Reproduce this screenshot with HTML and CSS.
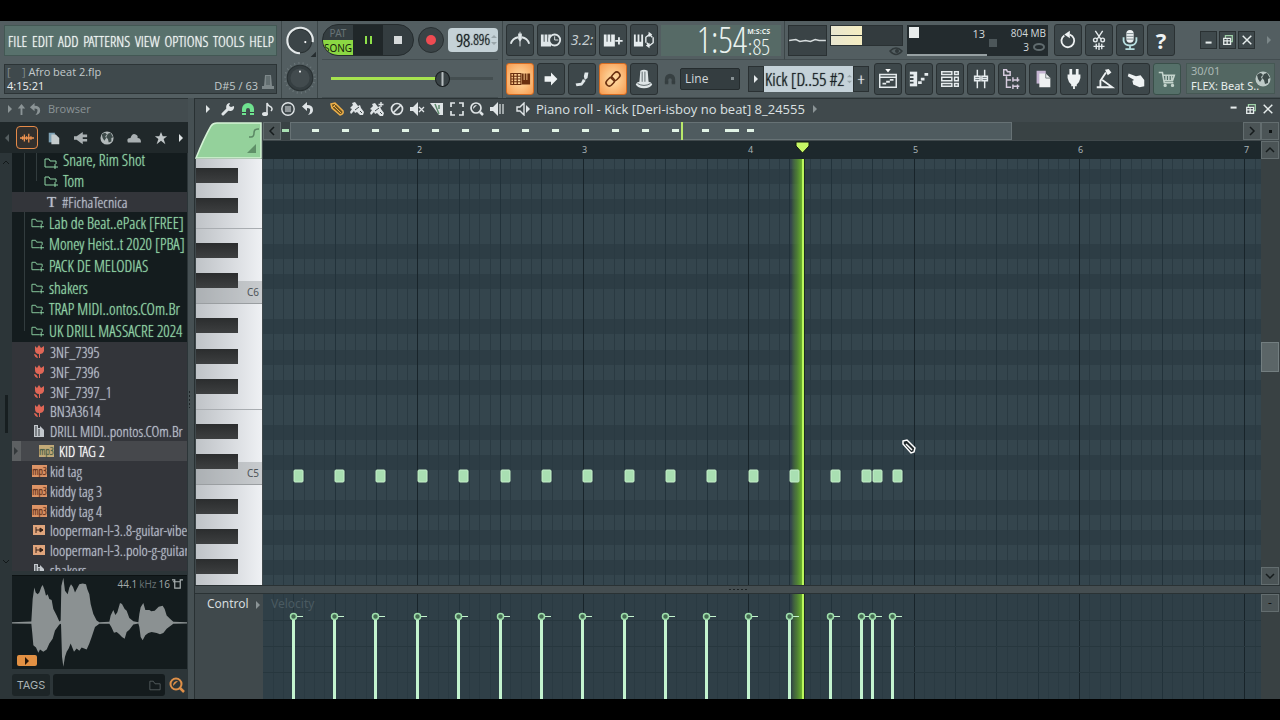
FILE: index.html
```html
<!DOCTYPE html>
<html lang="en">
<head>
<meta charset="utf-8">
<title>Piano roll - Afro beat 2.flp</title>
<link rel="stylesheet" href="styles.css">
</head>
<body>
<svg class="defs" aria-hidden="true">
  <symbol id="folder" viewBox="0 0 14 14"><path d="M9 11H1V3h4l1 2h6v3M11 8v5M9 11h5" fill="none" stroke="currentColor"/></symbol>
  <symbol id="tulip" viewBox="0 0 14 14"><path d="M3 1l2 2 2-3 2 3 3-2v5q-1 3-4 3v4H7V9Q3 9 3 5zM2 9q3 0 4 4Q3 13 2 9z" fill="#df6656"/></symbol>
  <symbol id="filepic" viewBox="0 0 14 14"><path d="M2 1h4v3h2v-2l4 4v7H2z" fill="#c3c8cd"/><path d="M4 2v10M7 5v7" stroke="#33363b"/></symbol>
  <symbol id="loop" viewBox="0 0 14 14"><path d="M1 2h12v10H1z" fill="#e0a57c"/><path d="M4 4v6M4 7h7M8 5l3 2-3 2z" stroke="#3a251a" fill="#3a251a"/></symbol>
  <symbol id="tri" viewBox="0 0 8 10"><path d="M2 1l4 4-4 4z" fill="currentColor"/></symbol>
  <symbol id="restore" viewBox="0 0 14 14"><path d="M4 5V2h8v7h-2" fill="none" stroke="#9fd0a8" stroke-width="1.5"/><path d="M2 5h8v7H2zM2 8h8M6 6v6" fill="none" stroke="#e6ecec" stroke-width="1.5"/></symbol>
  <symbol id="close" viewBox="0 0 14 14"><path d="M2 2l10 10M12 2L2 12" stroke="#e6ecec" stroke-width="1.7"/></symbol>
  <symbol id="min" viewBox="0 0 14 14"><path d="M3 10h7" stroke="#e6ecec" stroke-width="2.4"/></symbol>
  <symbol id="undo" viewBox="0 0 14 14"><path d="M6 0L1 4.500 6 9V6q4 0 3 3 0 2-2 4 5-1 5-5 0-5-6-5z" fill="currentColor"/></symbol>
  <symbol id="magnet" viewBox="0 0 14 14"><path d="M1 13V7a6 6 0 0112 0v6H9V8a2 2 0 00-4 0v5z" fill="currentColor"/><path d="M1 10.5h4M9 10.5h4" stroke="#333d40"/></symbol>
  <symbol id="globe" viewBox="0 0 16 16"><circle cx="8" cy="8" r="7.5" fill="currentColor"/><path d="M2 4q2-2 4-2l2 2-2 2 1 2-2 3-2-3zM9 3l3-1 3 5-2 1 0 4-3 1-1-4-2-2z" fill="#3d4a49"/></symbol>
  <symbol id="brush" viewBox="0 0 14 14"><path d="M2 1l3-1 3 4 2-1 1 3 3 4-1 3-3 0-3-3-2 1-1-2-3 3-1-2 2-3-2-1 3-3z" fill="currentColor"/><path d="M5 8l4-3M10 9l2 2" stroke="#3d474a"/></symbol>
</svg>

<div class="app">
<header class="toolbar">
  <section class="block brand">
    <nav class="menu">
      <button>FILE</button><button>EDIT</button><button>ADD</button><button>PATTERNS</button><button>VIEW</button><button>OPTIONS</button><button>TOOLS</button><button>HELP</button>
    </nav>
    <div class="hint">
      <div><span class="dim">[ &nbsp; &nbsp;]</span> Afro beat 2.flp</div>
      <div class="hint-row"><span class="bright">4:15:21</span><span>D#5 / 63</span></div>
      <svg class="hint-knob" viewBox="0 0 12 16"><path d="M3 1h6l1 11h2v3H0v-3h2z" fill="#7d8789"/><path d="M5 2v9M7 2v9" stroke="#4b5658"/></svg>
    </div>
  </section>
  <section class="block knobs">
    <svg viewBox="0 0 32 32"><circle cx="16" cy="16" r="11" fill="#3b4447" stroke="#2a3133"/><path d="M16 27.500A12 12 0 1 1 28 17" fill="none" stroke="#e4e9ea" stroke-width="2"/><circle cx="21" cy="17" r="1" fill="#fff"/><path d="M31 26v5h-5z" fill="#262d2f"/></svg>
    <svg viewBox="0 0 32 32"><circle cx="16" cy="15" r="14" fill="none" stroke="#6a7578" stroke-dasharray="1 3" stroke-width="2"/><circle cx="16" cy="15" r="12" fill="#353e41" stroke="#293133"/><circle cx="16" cy="15" r="9" fill="#424b4e"/><circle cx="16" cy="9" r="1" fill="#e6eaea"/></svg>
  </section>
  <section class="block transport">
    <div class="row play">
      <div class="pill">
        <div class="mode"><button class="pat">PAT</button><button class="song">SONG</button></div>
        <button class="pause" aria-label="Pause"><i></i><i></i></button>
        <button class="stop" aria-label="Stop"><i></i></button>
      </div>
      <button class="rec" aria-label="Record"><i></i></button>
      <div class="tempo"><b>98</b><span>.896</span><svg viewBox="0 0 8 14"><path d="M1 5l3-3 3 3zM1 9l3 3 3-3z" fill="#9aa6aa"/></svg></div>
    </div>
    <div class="row"><input class="volume" type="range" min="0" max="100" value="71" aria-label="Song position"></div>
  </section>
  <section class="block center">
    <div class="row">
      <button class="tool" aria-label="Metronome"><svg viewBox="0 0 24 24"><path d="M2 16Q4 10 10 9M22 16Q20 10 14 9" fill="none" stroke="#dfe6e8" stroke-width="2"/><path d="M12 3v16" stroke="#dfe6e8"/><path d="M10 5h4v6l-2 3-2-3z" fill="#dfe6e8"/></svg></button>
      <button class="tool" aria-label="Wait for input"><svg viewBox="0 0 24 24"><path d="M1 6h3v8h1V6h3v8h1V6h3v13H1z" fill="#dfe6e8"/><circle cx="16" cy="12" r="6" fill="#3a4447" stroke="#dfe6e8" stroke-width="2"/><path d="M16 8v4h4" stroke="#dfe6e8" fill="none"/></svg></button>
      <button class="tool count" aria-label="Countdown">3.2:</button>
      <button class="tool" aria-label="Blend notes"><svg viewBox="0 0 24 24"><path d="M2 6h3v8h1V6h3v8h1V6h4v13H2z" fill="#e6ecee"/><path d="M18.500 9v8M14.500 13h8" stroke="#e6ecee" stroke-width="2"/></svg></button>
      <button class="tool" aria-label="Loop record"><svg viewBox="0 0 24 24"><path d="M1 6h2v8h2V6h2v8h2V6h2v13H1z" fill="#e6ecee"/><path d="M14 15V9l4-3 3 3M22 9v6l-4 3-3-3" fill="none" stroke="#e6ecee" stroke-width="1.500"/><path d="M17 3l4 3-4 3zM18 15l-4 3 4 3z" fill="#e6ecee"/></svg></button>
      <div class="clock"><span class="big">1:54</span><span class="small"><em>M:S:CS</em>:85</span></div>
    </div>
    <div class="row">
      <button class="tool on" aria-label="Typing keyboard"><svg viewBox="0 0 24 24"><path d="M2 6h11v12H2zM2 9h11M2 12h11M2 15h11M5 6v12M9 6v12" fill="none" stroke="#6a3010" stroke-width="1.300"/><path d="M14 6h2v7h1V6h2v7h1V6h3v12h-9z" fill="#6a3010"/></svg></button>
      <button class="tool" aria-label="Step"><svg viewBox="0 0 24 24"><path d="M5 9h7V5l7 7-7 7v-4H5z" fill="#eef2f3"/></svg></button>
      <button class="tool" aria-label="Slide"><svg viewBox="0 0 24 24"><path d="M15 5l4 0-1 6-3 2-1-4zM13 12l3 2-4 5-6 1-1-3 6-1z" fill="#dfe6e8"/></svg></button>
      <button class="tool on" aria-label="Link"><svg viewBox="0 0 24 24" fill="none" stroke="#6a3010" stroke-width="1.700"><rect x="11.500" y="4" width="7" height="10" rx="3.500" transform="rotate(45 15 9)"/><rect x="5.500" y="10" width="7" height="10" rx="3.500" transform="rotate(45 9 15)"/></svg></button>
      <button class="tool" aria-label="Multilink"><svg viewBox="0 0 24 24"><path d="M8 3q4-2 8 0l1 12q3 0 4 3-2 4-9 4t-9-4q1-3 4-3z" fill="#dfe6e8"/><path d="M10 4v11M13 4v11M5 17q7 4 14 0" fill="none" stroke="#556064"/></svg></button>
      <svg class="snapicon"><use href="#magnet"/></svg>
      <select class="snap" aria-label="Snap"><option>Line</option></select>
      <div class="pattern"><button aria-label="Pattern menu"><svg><use href="#tri"/></svg></button><span>Kick [D..55 #2</span><svg class="updown" viewBox="0 0 8 14"><path d="M1 5l3-3 3 3zM1 9l3 3 3-3z" fill="#9aa6aa"/></svg><button aria-label="Add pattern">+</button></div>
    </div>
  </section>
  <section class="block right">
    <div class="row">
      <div class="scope"><svg viewBox="0 0 38 30"><path d="M0 15l7-1 4 2 6-1 5 1 5-2 4 1h7" fill="none" stroke="#d6dcdd" stroke-width="1.500"/></svg></div>
      <div class="peak"><div class="meter"><i></i><i></i></div><svg viewBox="0 0 14 9"><path d="M1 4q6-6 12 0-6 7-12 0z" fill="none" stroke="#30383a" stroke-width="1.500"/><circle cx="8" cy="4" r="2" fill="#30383a"/></svg></div>
      <div class="cpu"><div class="cpu-l"><i></i><span>13</span></div><div class="cpu-r"><i></i><span>804 MB</span><span>3 <svg viewBox="0 0 14 8"><ellipse cx="7" cy="4" rx="5" ry="3" fill="none" stroke="#606b6e" stroke-width="2"/></svg></span></div></div>
      <div class="tools">
        <button class="tool" aria-label="Undo"><svg viewBox="0 0 24 24"><path d="M14 6.200a7 7 0 1 1-6 .800" fill="none" stroke="#eef2f3" stroke-width="2"/><path d="M14 2v8L8 6z" fill="#eef2f3"/></svg></button>
        <button class="tool" aria-label="Cut"><svg viewBox="0 0 24 24" fill="none" stroke="#e6ecee" stroke-width="1.500"><path d="M8 2l6 9M16 2l-6 9"/><circle cx="8" cy="12" r="2"/><circle cx="16" cy="12" r="2"/><path d="M6 19h12M9 16v6M12 15v8M15 16v6"/></svg></button>
        <button class="tool" aria-label="Record audio"><svg viewBox="0 0 24 24"><rect x="8" y="1" width="8" height="14" rx="4" fill="#eef2f3"/><path d="M8 5h8M8 8h8M8 11h8" stroke="#77858a"/><path d="M5 9v4q1 5 7 5t7-5V9M12 18v4M7 22h10" fill="none" stroke="#b8dfe0" stroke-width="2"/></svg></button>
        <button class="tool help" aria-label="Help">?</button>
      </div>
      <div class="win"><button aria-label="Minimize"><svg><use href="#min"/></svg></button><button aria-label="Restore"><svg><use href="#restore"/></svg></button><button aria-label="Close"><svg><use href="#close"/></svg></button></div>
      <svg class="more"><use href="#tri"/></svg>
    </div>
    <div class="row">
      <button class="tool" aria-label="Playlist"><svg viewBox="0 0 24 24"><path d="M9 1h6l-3 4z" fill="#fff"/><path d="M3 7h18v14H3zM3 10h18" fill="none" stroke="#e6ecee" stroke-width="1.600"/><path d="M6 17h4M10 15h4M14 13h4" stroke="#e6ecee" stroke-width="2"/></svg></button>
      <button class="tool" aria-label="Piano roll"><svg viewBox="0 0 24 24"><path d="M2 4h8v16H2z" fill="#e6ecee"/><path d="M2 8h4M2 12h4M2 16h4" stroke="#3d474a" stroke-width="2"/><path d="M11 16h4M14 12h4M18 7h4" stroke="#e6ecee" stroke-width="3"/></svg></button>
      <button class="tool" aria-label="Channel rack"><svg viewBox="0 0 24 24" fill="none" stroke="#e6ecee" stroke-width="1.600"><path d="M3 4h11v3H3zM3 10h11v4H3zM3 17h11v3H3zM17 4h4v3h-4zM17 10h4v4h-4zM17 17h4v3h-4z"/></svg></button>
      <button class="tool" aria-label="Mixer"><svg viewBox="0 0 24 24" fill="none" stroke="#e6ecee" stroke-width="1.600"><path d="M8 2v20M16 2v20"/><path d="M5 9h6v5H5zM13 9h6v5h-6z" fill="#59656a"/><path d="M5 11.500h6M13 11.500h6"/></svg></button>
      <button class="tool" aria-label="Browser"><svg viewBox="0 0 24 24" fill="none" stroke="#d5cadd" stroke-width="1.600"><path d="M3 2h3l1 2h3v4H3zM6 9v12h5M6 13h5M13 10v5M13 18v5M13 13h7M13 20h7M18 10v5M18 18v5"/></svg></button>
      <button class="tool" aria-label="Project picker"><svg viewBox="0 0 24 24"><path d="M5 3h10v14H5z" fill="#c5b5d2"/><path d="M8 6h7l5 5v10H8z" fill="#eef0f1"/><path d="M15 6v5h5" fill="none" stroke="#6d777a"/></svg></button>
      <button class="tool" aria-label="Plugins"><svg viewBox="0 0 24 24"><path d="M7 1h3v6h4V1h3v6h2v4q-1 5-4 7v2h-2v3h-2v-3H9v-2q-3-2-4-7V7h2z" fill="#eef2f3"/></svg></button>
      <button class="tool" aria-label="Tempo tapper"><svg viewBox="0 0 24 24"><path d="M13 5L7 14v7M9 13l11 8H3" fill="none" stroke="#eef2f3" stroke-width="2"/><path d="M12 2l4-1 3 4-4 3z" fill="#eef2f3"/></svg></button>
      <button class="tool" aria-label="Touch"><svg viewBox="0 0 24 24"><path d="M4 6l8 3 5-1 4 5v7l-5 1-7-3-1-4 2-1-7-4z" fill="#eef2f3"/></svg></button>
      <button class="tool cart" aria-label="Shop"><svg viewBox="0 0 24 24" fill="none" stroke="#c4d3cc" stroke-width="1.700"><path d="M3 5h4l2 11h10M7 8h13l-2 6H9M11 8v6M14 8v6M17 8v6"/><circle cx="10" cy="19" r="1"/><circle cx="18" cy="19" r="1"/></svg></button>
      <div class="news"><span class="date">30/01</span><span>FLEX: Beat S..</span><svg><use href="#globe"/></svg></div>
    </div>
  </section>
</header>

<main class="work">
  <aside class="browser">
    <div class="bhead"><svg class="t"><use href="#tri"/></svg><svg viewBox="0 0 14 14"><path d="M7 1l4 5H8v7H6V6H3z" fill="currentColor"/></svg><svg><use href="#undo"/></svg><span>Browser</span></div>
    <div class="tabs">
      <svg class="t flip"><use href="#tri"/></svg>
      <button class="active" aria-label="All"><svg viewBox="0 0 16 16"><path d="M0 8h16M3 6v4M5 4v8M7.500 6v4M10 3v10M12.500 6v4" stroke="#ee9250" stroke-width="1.500"/></svg></button>
      <button aria-label="Project"><svg viewBox="0 0 16 16"><path d="M2 2h7v11H2z" fill="#7ea2b5"/><path d="M5 4h5l4 4v7H5z" fill="#c4cbcc"/></svg></button>
      <button aria-label="Plugins"><svg viewBox="0 0 16 16"><path d="M0 6h3l7-5v14l-7-5H0zM10 4h5v3h-5zM10 9h5v3h-5z" fill="#a9b0b2"/></svg></button>
      <button aria-label="Library"><svg><use href="#globe"/></svg></button>
      <button aria-label="Cloud"><svg viewBox="0 0 16 16"><path d="M1 13q-2-5 3-5 2-6 6-4 3 1 2 4 4 0 4 5z" fill="#a9b0b2"/></svg></button>
      <button aria-label="Starred"><svg viewBox="0 0 16 16"><path d="M8 1l2 5h5l-4 3 2 6-5-4-5 4 2-6-4-3h5z" fill="#c1c7c9"/></svg></button>
      <svg class="t lit"><use href="#tri"/></svg>
    </div>
    <div class="bmid">
      <div class="gutter"><svg viewBox="0 0 10 6"><path d="M2 5l3-3 3 3" fill="none" stroke="#121819"/></svg><i></i><svg viewBox="0 0 10 6"><path d="M2 1l3 3 3-3" fill="none" stroke="#121819"/></svg></div>
      <div class="list">
        <ul class="sub folders"><li><svg><use href="#folder"/></svg>Snare, Rim Shot</li><li><svg><use href="#folder"/></svg>Tom</li></ul>
        <p class="note"><b>T</b>#FichaTecnica</p>
        <ul class="packs folders">
          <li><svg><use href="#folder"/></svg>Lab de Beat..ePack [FREE]</li><li><svg><use href="#folder"/></svg>Money Heist..t 2020 [PBA]</li><li><svg><use href="#folder"/></svg>PACK DE MELODIAS</li><li><svg><use href="#folder"/></svg>shakers</li><li><svg><use href="#folder"/></svg>TRAP MIDI..ontos.COm.Br</li><li><svg><use href="#folder"/></svg>UK DRILL MASSACRE 2024</li>
        </ul>
        <ul class="files">
          <li><svg><use href="#tulip"/></svg>3NF_7395</li><li><svg><use href="#tulip"/></svg>3NF_7396</li><li><svg><use href="#tulip"/></svg>3NF_7397_1</li><li><svg><use href="#tulip"/></svg>BN3A3614</li><li><svg><use href="#filepic"/></svg>DRILL MIDI..pontos.COm.Br</li>
          <li class="sel"><span class="grip"><svg><use href="#tri"/></svg></span><b>mp3</b>KID TAG 2</li>
          <li><b>mp3</b>kid tag</li><li><b>mp3</b>kiddy tag 3</li><li><b>mp3</b>kiddy tag 4</li><li><svg><use href="#loop"/></svg>looperman-l-3..8-guitar-vibe</li><li><svg><use href="#loop"/></svg>looperman-l-3..polo-g-guitar</li><li><svg><use href="#filepic"/></svg>shakers</li>
        </ul>
      </div>
    </div>
    <div class="preview">
      <svg class="wave" viewBox="36 45 525 282" preserveAspectRatio="none"><path d="M36 185L94 183 98 115 103 80 107 95 113 100 118 95 124 78 128 72 133 85 138 105 143 100 148 115 155 118 160 145 170 165 178 183 182 180 184 75 190 50 195 90 203 100 208 80 213 70 219 78 225 95 230 85 238 70 248 68 258 70 262 85 268 100 272 130 280 160 290 180 298 185 328 184 332 165 340 148 346 163 352 155 360 127 366 130 374 145 380 150 388 172 400 182 415 185 418 160 422 140 430 127 436 148 448 148 454 152 464 150 476 138 488 135 494 145 500 165 510 175 520 184 561 185V189L520 190 510 197 500 205 490 218 480 222 470 218 455 215 445 218 436 225 428 240 422 230 418 200 415 189 400 192 388 208 380 215 374 235 366 230 358 222 350 215 342 217 334 200 328 190 298 190 285 200 275 230 268 250 260 268 245 262 238 272 230 265 222 275 212 250 206 265 200 275 195 290 190 320 186 290 183 190 178 192 165 210 158 235 148 250 140 268 130 275 120 268 115 278 108 262 100 255 97 220 94 190 36 189z" fill="#8b9192"/></svg>
      <span class="rate"><span>44.1</span> kHz <span>16</span><svg viewBox="0 0 12 12"><path d="M3 3h6v7H3zM0 1h3v2H1M12 1H9v2" fill="none" stroke="#aab2b3" stroke-width="1.300"/></svg></span>
      <button class="pv" aria-label="Preview"><svg><use href="#tri"/></svg></button>
    </div>
    <div class="tags"><button>TAGS</button><label class="search"><input type="text" aria-label="Search"><svg viewBox="0 0 14 12"><path d="M1 11V1h4l2 3h6v7z" fill="none" stroke="#596162"/></svg></label><svg class="mag" viewBox="0 0 16 16"><circle cx="7" cy="7" r="5.500" fill="none" stroke="#df9048" stroke-width="2"/><path d="M11 11l4 4" stroke="#df9048" stroke-width="2.500"/><path d="M4 9q0-5 5-5z" fill="#df9048"/></svg></div>
  </aside>
  <div class="divider"><i></i></div>

  <section class="roll">
    <div class="rtitle">
      <div class="icons">
        <svg class="t lit"><use href="#tri"/></svg>
        <svg viewBox="0 0 14 14"><path d="M2 12l6-6" stroke="#dfe4e6" stroke-width="3" stroke-linecap="round"/><path d="M13 4a4 4 0 1 1-4-3L8 4l2 1z" fill="#dfe4e6"/></svg>
        <svg class="green"><use href="#magnet"/></svg>
        <svg viewBox="0 0 14 14"><ellipse cx="4" cy="12" rx="3" ry="2" fill="#dfe4e6"/><path d="M6 12V1q1 3 4 4 2 2 0 4" fill="none" stroke="#dfe4e6" stroke-width="1.500"/></svg>
        <svg viewBox="0 0 14 14"><circle cx="7" cy="7" r="6.200" fill="none" stroke="#dfe4e6" stroke-width="1.400"/><path d="M4 5h6M4 7h6M4 9h6" stroke="#dfe4e6"/></svg>
        <svg><use href="#undo"/></svg>
      </div>
      <div class="icons">
        <svg viewBox="0 0 14 14"><path d="M1 2l4-1 8 8q1 3-3 4L2 6z" fill="#70541f" stroke="#eeb04a" stroke-width="1.500"/><path d="M4 4l7 7M2 6l4-4" stroke="#eeb04a"/></svg>
        <svg><use href="#brush"/></svg>
        <svg viewBox="0 0 14 14"><use href="#brush" y="1"/><path d="M11 0v5M8.500 2.500h5" stroke="#dfe4e6" stroke-width="1.400"/></svg>
        <svg viewBox="0 0 14 14"><circle cx="7" cy="7" r="5.500" fill="none" stroke="#dfe4e6" stroke-width="1.700"/><path d="M3 11l8-8" stroke="#dfe4e6" stroke-width="1.700"/></svg>
        <svg viewBox="0 0 14 14"><path d="M0 5h3l5-5v14L3 9H0z" fill="#dfe4e6"/><path d="M9 5l5 5M14 5l-5 5" stroke="#dfe4e6" stroke-width="1.300"/></svg>
        <svg viewBox="0 0 14 14"><path d="M0 1h13v12H9z" fill="#dfe4e6"/><path d="M5 2l4 10M9 3v4" stroke="#5e8a6c" stroke-width="1.500"/></svg>
        <svg viewBox="0 0 14 14"><path d="M1 5V1h4M9 1h4v4M13 9v4H9M5 13H1V9" fill="none" stroke="#dfe4e6" stroke-width="1.700"/></svg>
        <svg viewBox="0 0 14 14"><circle cx="6" cy="6" r="5" fill="none" stroke="#dfe4e6" stroke-width="1.700"/><path d="M10 10l3 3" stroke="#dfe4e6" stroke-width="2.500"/><path d="M3 7q0-4 4-4z" fill="#dfe4e6"/></svg>
        <svg viewBox="0 0 14 14"><path d="M0 5h3l5-5v14L3 9H0z" fill="#dfe4e6"/><path d="M10 2v10M13 2v10" stroke="#dfe4e6" stroke-width="1.200"/></svg>
      </div>
      <div class="caption"><svg viewBox="0 0 14 14"><path d="M1 5h3l4-4v12L4 9H1z" fill="none" stroke="#dfe4e6" stroke-width="1.400"/><path d="M10 3l4 4-4 4z" fill="#dfe4e6"/></svg><span>Piano roll - Kick [Deri-isboy no beat] 8_24555</span><svg class="t"><use href="#tri"/></svg></div>
      <div class="rwin"><svg class="m"><use href="#min"/></svg><svg><use href="#restore"/></svg><svg><use href="#close"/></svg></div>
    </div>
    <div class="stage">
      <div class="corner"><svg viewBox="0 0 68 37"><path d="M1 36Q9 16 16 4q2-3 6-3h44v35z" fill="#94d19b" stroke="#d5f3d6" stroke-width="1.500"/><path d="M54 15h2q3 0 3-4t4-4h1" fill="none" stroke="#5b8764" stroke-width="1.500"/><path d="M52 31l9-9v9z" fill="#5f9068"/></svg></div>
      <div class="mini"><button aria-label="Scroll left"><svg viewBox="0 0 10 10"><path d="M7 1L3 5l4 4" fill="none" stroke="#161c1d" stroke-width="1.500"/></svg></button><div class="track"><div class="view"></div><svg id="mini"></svg></div><button aria-label="Scroll right"><svg viewBox="0 0 10 10"><path d="M3 1l4 4-4 4" fill="none" stroke="#161c1d" stroke-width="1.500"/></svg></button></div>
      <button class="sq" aria-label="Zoom"><i></i></button>
      <div class="ruler"><svg id="ruler"></svg></div>
      <button class="sq" aria-label="Scroll up"><svg viewBox="0 0 10 10"><path d="M1 7l4-4 4 4" fill="none" stroke="#161c1d" stroke-width="1.500"/></svg></button>
      <div class="keys"><svg id="keys"></svg></div>
      <div class="grid"><svg id="grid"></svg></div>
      <div class="vscroll"><i></i><button class="sq" aria-label="Scroll down"><svg viewBox="0 0 10 10"><path d="M1 3l4 4 4-4" fill="none" stroke="#161c1d" stroke-width="1.500"/></svg></button></div>
      <div class="split"><i></i></div>
      <div class="ctl"><span>Control</span><svg class="t"><use href="#tri"/></svg></div>
      <div class="lane"><svg id="lane"></svg></div>
      <div class="lscroll"><button class="sq" aria-label="Lane size">-</button></div>
    </div>
  </section>
</main>
</div>
<script src="roll.js"></script>
</body>
</html>
```
FILE: styles.css
```css
:root { --narrow: "Open Sans Condensed Light", "Open Sans Condensed", "Liberation Sans Narrow", sans-serif; }
* { box-sizing: border-box; }
body { margin: 0; background: #000; color: #d5dbdd; font: 12px/16px "Noto Sans", "Open Sans", sans-serif; }
button { font: inherit; color: inherit; border: 0; padding: 0; background: none; display: flex; align-items: center; justify-content: center; text-shadow: inherit; }
ul, p { margin: 0; padding: 0; list-style: none; }
svg { display: block; flex: none; width: 14px; height: 14px; }
svg.t { width: 8px; height: 10px; color: #8b9496; }
svg.lit { color: #e0e5e6; }
.defs { position: absolute; width: 0; height: 0; }
.app { min-height: 100vh; padding: 21px 0 22px; display: flex; flex-direction: column; }

.toolbar { display: flex; background: #535e61; height: 77px; }
.block { display: grid; grid-template-rows: 39px 38px; border-right: 1px solid #3c4648; }
.block > * { border-bottom: 1px solid #434d50; }
.row { display: flex; align-items: center; gap: 3px; min-width: 0; }
.brand { flex: 0 0 282px; }
.brand > * { margin: 4px; }
.menu { background: #58716c; border: 1px solid #435854; display: flex; justify-content: space-between; align-items: center; padding: 0 2px 0 3px; font: 15px/20px var(--narrow); color: #f2f7f5; text-shadow: 0 0 1px currentColor; }
.hint { position: relative; background: #3f494c; border: 1px solid #2c3436; color: #c2c9cb; font: 11px/14px "Open Sans", sans-serif; padding: 0 18px 0 2px; }
.hint-row { display: flex; justify-content: space-between; }
.dim { color: #828c8f; }
.bright { color: #eceff0; }
.hint-knob { position: absolute; right: 2px; bottom: 3px; width: 12px; height: 16px; }
.knobs { flex: 0 0 36px; justify-items: center; align-items: center; }
.knobs svg { width: 34px; height: 36px; border: 0; }
.transport { flex: 0 0 185px; padding: 0 4px; }
.play { gap: 4px; }
.pill { display: flex; width: 92px; height: 32px; border-radius: 16px; overflow: hidden; background: #343d40; border: 1px solid #252c2e; }
.mode { flex: 1; display: grid; grid-template-rows: 1fr 1fr; font-size: 10px; line-height: 12px; }
.pat { color: #687376; }
.song { background: #8bd743; color: #15220b; }
.pause { width: 30px; background: #202729; gap: 3px; }
.pause i { width: 2px; height: 8px; background: #8ee04a; }
.stop { width: 30px; }
.stop i { width: 8px; height: 8px; background: #d6dadb; }
.rec { width: 26px; height: 26px; border-radius: 50%; background: #3a4346; border: 1px solid #282f31; }
.rec i { width: 10px; height: 10px; border-radius: 50%; background: #ee4b52; }
.tempo { flex: 1; height: 24px; border-radius: 4px; background: #c5d2d7; color: #151b1d; display: flex; align-items: center; justify-content: flex-end; font: 14px/20px var(--narrow); text-shadow: 0 0 1px currentColor; }
.tempo b { font-size: 18px; font-weight: 400; }
.tempo svg { width: 8px; }
.volume { appearance: none; width: 100%; height: 20px; margin: 0 5px 0 9px; background: linear-gradient(90deg, #a6e34f 71%, #444e50 71%) center / 100% 3px no-repeat; }
.volume::-webkit-slider-thumb { appearance: none; width: 15px; height: 16px; border-radius: 50%; border: 1px solid #171c1e; background: linear-gradient(90deg, #3a4346 5px, #b7bec0 6px, #b7bec0 7px, #3a4346 8px); }
.center { flex: 0 0 281px; padding-left: 3px; border-right: 0; }
.tool { flex: none; width: 28px; height: 32px; border: 1px solid #2a3133; border-radius: 3px; background: #3d474a; }
.tool svg { width: 22px; height: 22px; }
.count { font: italic 14px/16px "Noto Sans", sans-serif; color: #c7cfd2; }
.on { background: radial-gradient(#ffe2ac, #f79a4e); border-color: #d66c22; }
.help { font: 700 22px/24px "Noto Sans", sans-serif; color: #eef2f3; }
.cart { background: #557069; border-color: #3a504a; }
.clock { flex: 1; height: 31px; background: #566a66; margin-right: 3px; display: flex; justify-content: flex-end; align-items: flex-end; padding-right: 11px; color: #eaf2ef; font-family: var(--narrow); }
.big { font-size: 36px; line-height: 32px; }
.small { font-size: 22px; line-height: 20px; display: grid; justify-items: end; }
.small em { font: 700 7px/8px "Noto Sans", sans-serif; }
.snapicon { color: #374042; margin: 0 1px 0 3px; width: 12px; height: 12px; }
.snap { appearance: none; flex: none; width: 60px; height: 22px; border: 1px solid #252c2e; border-radius: 2px; background: #343d40 linear-gradient(#879194, #879194) right 5px center / 3px 3px no-repeat; color: #d2d8da; font: 12px/16px "Open Sans", sans-serif; padding: 0 4px; }
.pattern { flex: none; width: 121px; margin-left: 5px; display: flex; height: 26px; background: #c5d2d9; color: #182024; align-items: center; font: 18px/22px var(--narrow); text-shadow: 0 0 1px currentColor; }
.pattern span { flex: 1; min-width: 0; white-space: nowrap; padding-left: 1px; }
.pattern button { flex: none; width: 16px; height: 26px; background: #3d474a; border: 1px solid #2a3133; color: #e5eaeb; }
.pattern button svg { width: 8px; height: 12px; }
.updown { width: 7px; height: 12px; }
.right { flex: 1; border: 0; }
.right .row:first-child { border-left: 1px solid #3c4648; padding-left: 3px; }
.scope { width: 39px; height: 31px; background: #3a4346; border: 1px solid #2a3133; }
.scope svg { width: 37px; height: 29px; }
.peak { width: 73px; height: 31px; display: grid; justify-items: end; align-content: space-between; }
.meter { width: 100%; background: #333b3e; display: grid; gap: 1px; border: 1px solid #2a3133; }
.meter i { height: 9px; width: 31px; background: linear-gradient(90deg, #e9e6d0, #f5edc1); }
.peak svg { width: 14px; height: 9px; }
.cpu { width: 141px; height: 31px; background: #232b2e; display: flex; margin: 0 1px; font: 11px/14px "Open Sans", sans-serif; }
.cpu-l { width: 80px; display: flex; justify-content: space-between; padding: 2px; border-bottom: 2px solid #96a0a2; }
.cpu-l i { width: 10px; height: 11px; background: #e8ecec; }
.cpu-r { position: relative; flex: 1; display: grid; justify-items: end; align-content: center; padding-right: 2px; font-size: 10px; }
.cpu-r i { position: absolute; left: 2px; top: 14px; width: 8px; height: 8px; background: #4c5659; }
.cpu-r span { display: flex; gap: 3px; align-items: center; }
.tools { display: flex; gap: 3px; margin-left: 2px; }
.win { display: flex; gap: 2px; margin-left: auto; }
.win button { width: 17px; height: 18px; background: #3e484b; border: 1px solid #2a3133; }
.win svg { width: 12px; height: 12px; }
.more { width: 8px; height: 10px; margin: 0 7px; color: #7c8789; }
.right .row:last-child { padding-left: 90px; }
.news { position: relative; flex: 1; margin: 0 5px 0 2px; height: 31px; background: #536762; border: 1px solid #465854; padding: 0 4px; display: grid; font-size: 11px; line-height: 14px; color: #e8eeec; white-space: nowrap; }
.news .date { color: #aab7b4; }
.news svg { position: absolute; right: 3px; top: 7px; width: 16px; height: 16px; color: #bdc9c6; }

.work { flex: 1; display: flex; min-height: 600px; background: #40494c; }
.browser { flex: 0 0 188px; display: flex; flex-direction: column; background: #2c3538; font: 15px/18px var(--narrow); min-width: 0; }
.bhead { height: 24px; display: flex; align-items: center; gap: 1px; padding: 0 0 3px 6px; background: #434c4f; border-top: 1px solid #2b3335; color: #8b9496; font: 11px/16px "Open Sans", sans-serif; }
.bhead svg:not(.t) { width: 13px; height: 13px; }
.bhead span { padding-left: 5px; }
.tabs { height: 31px; display: flex; align-items: center; gap: 5px; padding: 0 3px 0 3px; background: #20282a; }
.tabs button { width: 22px; height: 23px; }
.tabs button svg { width: 14px; height: 14px; color: #b3babb; }
.tabs .active { border: 1px solid #e58a48; border-radius: 4px; background: #33302d; }
.flip { transform: rotate(180deg); opacity: 0.5; }
.bmid { height: 418px; display: flex; overflow: hidden; }
.gutter { width: 12px; display: flex; flex-direction: column; align-items: center; justify-content: space-between; padding: 6px 0; }
.gutter svg { width: 10px; height: 6px; }
.gutter i { width: 3px; height: 38px; background: #171e20; margin-top: 104px; }
.list { flex: 1; min-width: 0; margin-right: 1px; background: #33353a; overflow: hidden; white-space: nowrap; color: #b8bfcb; text-shadow: 0 0 1px currentColor; }
.list li, .note { display: flex; align-items: center; gap: 5px; }
.folders { color: #8ed3a4; font-size: 16px; }
.sub { height: 39px; display: grid; grid-template-rows: 17px 22px; padding-left: 32px; background: linear-gradient(#323c3e, #323c3e) 24px 0 / 1px 28px no-repeat, linear-gradient(#323c3e, #323c3e) 12px 0 / 1px 100% no-repeat #141c1e; }
.list .sub li:first-child { align-items: flex-end; line-height: 20px; }
.note { height: 20px; padding-left: 35px; }
.note b { font: 15px/18px "Liberation Serif", serif; width: 10px; }
.packs { height: 130px; display: grid; grid-template-rows: repeat(6, 1fr); padding-left: 19px; background: linear-gradient(#323c3e, #323c3e) 12px 0 / 1px 119px no-repeat #141c1e; }
.packs svg { width: 13px; }
.files { height: 238px; display: grid; grid-template-rows: repeat(12, 1fr); }
.files li { padding-left: 20px; gap: 4px; }
.files b { width: 15px; height: 12px; background: #dd9466; color: #4e2313; font: 10px/12px var(--narrow); text-align: center; margin-right: -1px; }
.files .sel { background: #46484c; color: #fff; padding-left: 0; }
.files .sel b { background: #c3aa78; color: #31503f; margin-right: 1px; }
.grip { width: 9px; align-self: stretch; background: #5d6062; color: #34393b; margin-right: 14px; display: flex; align-items: center; }
.grip svg { width: 8px; height: 10px; }
.preview { position: relative; height: 94px; margin: 4px 1px 0 12px; background: #141c1e; border-top: 1px solid #0c1213; }
.wave { width: 100%; height: 100%; }
.rate { position: absolute; top: 0; right: 4px; display: flex; gap: 2px; align-items: center; color: #687173; font: 10px/16px "Open Sans", sans-serif; }
.rate span { color: #a2a9ab; }
.rate svg { width: 11px; height: 11px; }
.pv { position: absolute; left: 5px; bottom: 3px; width: 20px; height: 11px; border-radius: 2px; background: #e29043; color: #24160a; }
.pv svg { width: 8px; height: 10px; }
.tags { display: flex; align-items: center; gap: 3px; height: 22px; margin: 5px 3px 3px 12px; }
.tags button { width: 38px; height: 22px; border-radius: 3px; background: #1d2527; color: #a9b2b4; font: 11px/16px Inter, sans-serif; }
.search { flex: 1; min-width: 0; height: 22px; display: flex; align-items: center; padding-right: 4px; background: #141b1d; border-radius: 3px; }
.search input { flex: 1; min-width: 0; border: 0; background: none; color: #a9b2b4; }
.search svg { width: 12px; height: 11px; }
.mag { width: 16px; height: 16px; margin-left: 1px; }
.divider { flex: 0 0 7px; background: #465053; border-right: 1px solid #293133; display: flex; align-items: center; }
.divider i { width: 3px; height: 18px; background: radial-gradient(#1f2628 1px, transparent 1px) 0 0 / 3px 4px; }

.roll { flex: 1; min-width: 0; display: flex; flex-direction: column; }
.rtitle { height: 24px; display: flex; align-items: center; gap: 9px; padding: 0 6px 3px 3px; border-top: 1px solid #2b3335; }
.icons { display: flex; color: #dfe4e6; }
.icons svg, .icons svg.t { width: 20px; height: 14px; }
.icons svg.t { height: 10px; align-self: center; }
.icons .green { color: #6fe28f; }
.caption { display: flex; align-items: center; gap: 6px; flex: 1; white-space: nowrap; color: #dbe0e2; font: 13px/16px "Open Sans", sans-serif; }
.rwin { display: flex; gap: 5px; }
.rwin svg { width: 12px; height: 12px; }
.rwin .m { margin-top: -4px; }
.stage { flex: 1; display: grid; grid-template-columns: 68px minmax(0, 1fr) 19px; grid-template-rows: 19px 18px minmax(0, 1fr) 9px 105px; }
.corner { grid-row: span 2; }
.corner svg { width: 68px; height: 37px; }
.mini { display: flex; height: 18px; background: #363f41; }
.mini button, .sq { width: 18px; height: 18px; background: #4b5456; border: 1px solid #636d6f; color: #111; }
.mini button svg, .sq svg { width: 10px; height: 10px; }
.track { flex: 1; position: relative; overflow: hidden; background: #394244; }
.view { position: absolute; left: 9px; top: 0; width: 75%; height: 18px; background: #4f5b5f; border: 1px solid #677275; }
.track svg { position: absolute; left: 0; top: 0; width: 100%; height: 18px; }
.sq i { width: 3px; height: 3px; background: #0e1314; }
.ruler { background: #1d282c; overflow: hidden; }
.ruler svg, .grid svg, .lane svg, .keys svg { width: 100%; height: 100%; }
.keys, .grid { overflow: hidden; min-height: 0; }
.grid, .lane { background: #2f3f47; }
.vscroll, .lscroll { background: #394143; display: flex; flex-direction: column; justify-content: space-between; }
.vscroll i { width: 18px; height: 30px; margin-top: 183px; background: #5b6567; border: 1px solid #737e80; }
.split { grid-column: 1 / -1; background: #454e51; border-top: 1px solid #2a3234; border-bottom: 1px solid #2a3234; display: grid; place-items: center; }
.split i { width: 20px; height: 3px; background: radial-gradient(#1d2325 1px, transparent 1px) 0 0 / 4px 3px; }
.ctl { display: flex; gap: 5px; padding: 2px 0 0 12px; }
.ctl svg.t { margin-top: 4px; }
.num { font: 9px "Noto Sans", sans-serif; fill: #a9b3b6; }
.key { font: 10px "Noto Sans", sans-serif; fill: #4e5458; }
.ghost { font: 12px "Noto Sans", sans-serif; fill: #4a5a61; }
```
FILE: roll.js
```js
const BAR = 165.4, BAR2 = 154.3, PITCH = 15.05, C5 = 325;
const hits = [];
for (let b = -3; b <= 9; b++) hits.push(b);
hits.push(10, 10.75, 11, 11.5);
const beatX = b => Math.floor(BAR2 + b * BAR / 4);
const rect = (x, y, w, h, fill, extra = '') =>
  `<rect x="${x}" y="${y}" width="${w}" height="${h}" fill="${fill}" ${extra}/>`;

function columns(h) {
  let s = '';
  for (let i = -14; i < 240; i++) {
    const x = Math.round(BAR2 + i * BAR / 16);
    const fill = i % 16 === 0 ? '#18242a' : i % 4 === 0 ? '#22323a' : '#2a3a42';
    s += rect(x, 0, 1, h, fill);
  }
  return s;
}

const glow = id => `<defs><linearGradient id="${id}"><stop offset="0" stop-color="#6ab52c" stop-opacity="0"/>
<stop offset="0.5" stop-color="#5d9c2c" stop-opacity="0.6"/><stop offset="1" stop-color="#6cb52c"/></linearGradient></defs>`;
const playhead = (h, id) => rect(528, 0, 11, h, `url(#${id})`) + rect(539, 0, 2, h, '#baf65c') + rect(541, 0, 1, h, '#1a2a20');

let grid = '', keys = `<defs><linearGradient id="ivory"><stop offset="0" stop-color="#bfc3c7"/><stop offset="0.5" stop-color="#d6d9dd"/>
<stop offset="1" stop-color="#eff1f4"/></linearGradient><linearGradient id="ebony" x2="0" y2="1"><stop offset="0" stop-color="#2b2d2e"/><stop offset="1" stop-color="#3d3f40"/></linearGradient></defs>`
  + rect(1, 0, 66, 2000, 'url(#ivory)');
const blacks = [1, 3, 6, 8, 10];
let black = '';
for (let k = -36; k < 30; k++) {
  const n = ((k % 12) + 12) % 12;
  const y = Math.round(C5 - (k + 1) * PITCH);
  const isBlack = blacks.includes(n);
  grid += rect(0, y, 4000, 16, isBlack ? '#2d3d45' : '#34454d');
  if (n === 0) {
    keys += rect(1, y - 7, 66, 22, '#8f9396', 'opacity="0.4"') + rect(1, y + 15, 66, 1, '#9a9ea1');
    if (k === 0 || k === 12) keys += `<text class="key" x="52" y="${y + 8}">C${5 + k / 12}</text>`;
  }
  if (n === 5) keys += rect(1, y + 15, 66, 1, '#a9adb1');
  if (isBlack) black += rect(1, y, 42, 15, 'url(#ebony)');
}
document.getElementById('keys').innerHTML = keys + black;

let notes = '';
hits.forEach(b => { notes += rect(beatX(b) + 1, C5 - 14, 9, 12, '#a9dfb2', 'rx="1" stroke="#c4efc9"'); });
document.getElementById('grid').innerHTML = glow('glow') + grid + columns(2000) + playhead(2000, 'glow') + notes
  + '<g transform="translate(639 281)" fill="#20282b" stroke="#fff" stroke-width="1.500"><path d="M1 1l4-1 8 8-1 4-3 1L1 4z"/><path d="M4 4l6 6"/></g>';

let lane = glow('glow2') + columns(300);
[26, 52, 78].forEach(y => { lane += rect(0, y, 4000, 1, '#27373e'); });
lane += '<text class="ghost" x="8" y="14">Velocity</text>' + playhead(300, 'glow2');
hits.forEach(b => {
  const x = beatX(b);
  lane += rect(x - 1, 25, 3, 200, '#c4f4cf') + rect(x + 3, 22, 7, 1, '#c4f4cf')
    + `<circle cx="${x + 0.5}" cy="22.5" r="3" fill="#456a52" stroke="#9fe0ac" stroke-width="1.5"/>`;
});
document.getElementById('lane').innerHTML = lane;

let ruler = '';
for (let i = 0; i < 6; i++) ruler += `<text class="num" x="${beatX(i * 4)}" y="12">${i + 2}</text>`;
document.getElementById('ruler').innerHTML = ruler + '<path d="M533 1h13v4l-6.500 7-6.500-7z" fill="#c5f765" stroke="#11180f"/>';

let mini = rect(1, 7, 7, 3, '#a9dfb2');
hits.forEach(b => { mini += rect(Math.round(121 + b * 30), 7, 7, 3, '#e1f3e6'); });
document.getElementById('mini').innerHTML = mini + rect(400, 0, 2, 18, '#b8e86a');
```
